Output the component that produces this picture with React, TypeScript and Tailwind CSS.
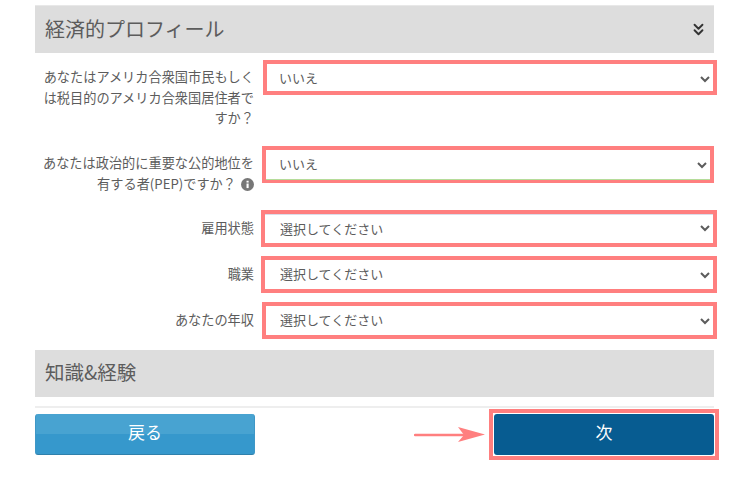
import { ChevronsDown } from 'lucide-react';

const FONT = "font-['Noto_Sans_CJK_JP','Noto_Sans',sans-serif]";

export default function App() {
  return (
    <div className={`${FONT} relative h-[486px] w-[750px] overflow-hidden bg-white pl-[35px] pt-[5px] text-[#5c5c5c]`}>
      {/* Section header */}
      <div className="flex h-[48px] w-[679px] items-center justify-between border-t border-[#e8e8e8] bg-[#dddddd] pl-[10px] pr-[6px]">
        <h2 className="pb-[2px] text-[20px] font-normal leading-none text-[#5c5c5c]">経済的プロフィール</h2>
        <ChevronsDown size={19} strokeWidth={2.4} className="text-[#333]" />
      </div>

      {/* Row 1 */}
      <div className="mt-[7px] flex h-[86px] items-start">
        <label className="w-[219px] pl-[6px] pt-[7px] text-right text-[13.2px] leading-[20.5px]">
          あなたはアメリカ合衆国市民もしくは税目的のアメリカ合衆国居住者ですか？
        </label>
        <div className="ml-[9px] h-[35px] w-[454px] border-[4px] border-[#ff7f7f]">
          <select className="h-full w-full pb-[3px] pl-[8px] text-[13px] text-[#5c5c5c] outline-none">
            <option>いいえ</option>
          </select>
        </div>
      </div>

      {/* Row 2 */}
      <div className="flex h-[64px] items-start">
        <label className="w-[219px] pl-[6px] pt-[7px] text-right text-[13.2px] leading-[20.5px]">
          あなたは政治的に重要な公的地位を有する者(PEP)ですか？
          <svg viewBox="0 0 16 16" className="ml-[5px] inline-block h-[13px] w-[13px] align-[-2px]">
            <circle cx="8" cy="8" r="8" fill="#777" />
            <rect x="6.8" y="6.8" width="2.6" height="5.6" fill="#fff" />
            <rect x="6.8" y="3.4" width="2.6" height="2.2" fill="#fff" />
          </svg>
        </label>
        <div className="ml-[8px] h-[37px] w-[452px] border-[4px] border-[#ff7f7f]">
          <select className="h-full w-full border-b border-[#b5dc9a] pb-[3px] pl-[9px] text-[13px] text-[#5c5c5c] outline-none">
            <option>いいえ</option>
          </select>
        </div>
      </div>

      {/* Row 3 */}
      <div className="flex h-[46px] items-start">
        <label className="w-[219px] pt-[8px] text-right text-[13.2px] leading-[20.5px]">雇用状態</label>
        <div className="ml-[7px] h-[37px] w-[456px] border-[4px] border-[#ff7f7f]">
          <select className="h-full w-full border-t border-[#dcdce8] pb-[2px] pl-[11px] text-[13px] text-[#5c5c5c] outline-none">
            <option>選択してください</option>
          </select>
        </div>
      </div>

      {/* Row 4 */}
      <div className="flex h-[46px] items-start">
        <label className="w-[219px] pt-[8px] text-right text-[13.2px] leading-[20.5px]">職業</label>
        <div className="ml-[7px] h-[37px] w-[456px] border-[4px] border-[#ff7f7f]">
          <select className="h-full w-full pb-[3px] pl-[11px] text-[13px] text-[#5c5c5c] outline-none">
            <option>選択してください</option>
          </select>
        </div>
      </div>

      {/* Row 5 */}
      <div className="flex h-[48px] items-start">
        <label className="w-[219px] pt-[8px] text-right text-[13.2px] leading-[20.5px]">あなたの年収</label>
        <div className="ml-[8px] h-[37px] w-[455px] border-[4px] border-[#ff7f7f]">
          <select className="h-full w-full pb-[4px] pl-[10px] text-[13px] text-[#5c5c5c] outline-none">
            <option>選択してください</option>
          </select>
        </div>
      </div>

      {/* Collapsed section */}
      <div className="flex h-[47px] w-[679px] items-center bg-[#dddddd] pl-[10px]">
        <h2 className="pb-[4px] text-[19.5px] font-normal leading-none text-[#5c5c5c]">知識&経験</h2>
      </div>

      <div className="mt-[9px] h-[2px] w-[679px] bg-[#eeeeee]" />

      {/* Footer buttons */}
      <div className="mt-[1px] flex items-center">
        <button className="h-[41px] w-[220px] rounded-[3px] border-x border-b border-x-[#3f97c6] border-b-[#2f80ab] bg-[linear-gradient(#48a3d1_50%,#3698cc_50%)] pb-[4px] text-[17px] text-white">
          戻る
        </button>
        <svg viewBox="0 0 72 16" className="ml-[159px] h-[16px] w-[72px]">
          <path d="M1 8H50" stroke="#ff7f7f" strokeWidth="2.5" strokeLinecap="round" />
          <path d="M44 0L71 7.5L44 15L50 8Z" fill="#ff7f7f" />
        </svg>
        <div className="ml-[3px] h-[51px] w-[230px] border-[4px] border-[#ff7f7f] p-[1px]">
          <button className="h-full w-full rounded-[3px] bg-[#075c91] pb-[5px] text-[17px] text-white">次</button>
        </div>
      </div>
    </div>
  );
}
